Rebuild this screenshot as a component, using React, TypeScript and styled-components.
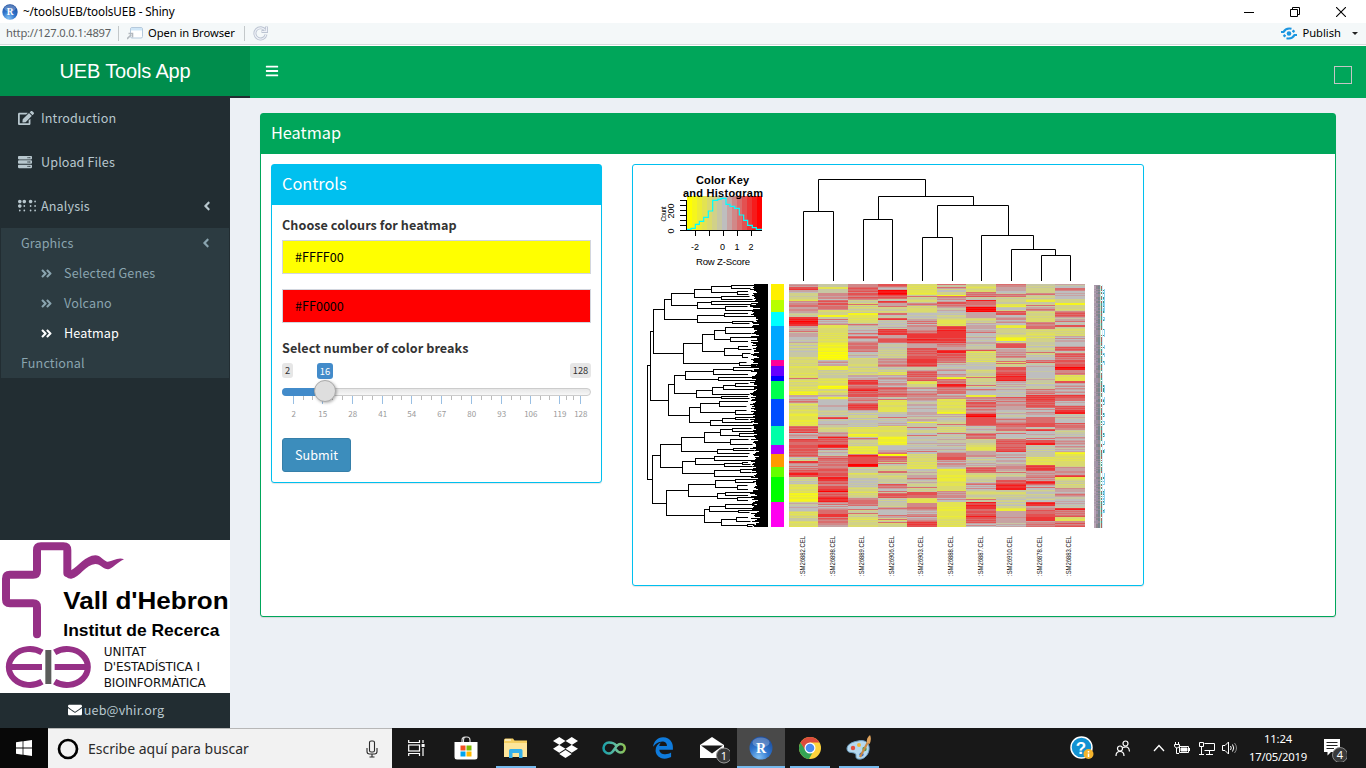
import React from "react";
import styled, { createGlobalStyle } from "styled-components";
import { FaAngleDoubleRight, FaAngleLeft, FaBars, FaBraille, FaDropbox, FaEdgeLegacy, FaEdit, FaEnvelope, FaServer } from "react-icons/fa";

const sans = `"Noto Sans CJK JP", "Noto Sans", sans-serif`;
const ui = `"Noto Sans", "Open Sans", sans-serif`;
const arial = `"Liberation Sans", Arial, sans-serif`;

const Global = createGlobalStyle`
  * { box-sizing: border-box; }
  body { margin: 0; overflow: hidden; background: #ecf0f5; }
  svg { display: block; flex: none; }
`;

const Screen = styled.div`
  width: 1366px;
  height: 768px;
  display: flex;
  flex-direction: column;
  font-family: ${sans};
  font-size: 12.6px;
`;

/* ---------- window chrome ---------- */
const TitleBar = styled.div`
  height: 23px;
  display: flex;
  align-items: center;
  padding: 0 20px 0 2px;
  background: #fff;
  font: 11.7px/23px ${ui};
  color: #000;
`;
const WindowTitle = styled.span`
  flex: 1;
  padding-left: 5px;
  letter-spacing: -0.1px;
`;
const WindowButtons = styled.div`
  display: flex;
  align-items: center;
  gap: 36px;
  height: 20px;
`;
const ToolBar = styled.div`
  height: 23px;
  display: flex;
  align-items: center;
  padding: 0 8px 2px 6px;
  background: #f4f8f9;
  border-bottom: 1px solid #fff;
  box-shadow: inset 0 -1px 0 #d6dadc;
  font: 11.2px/20px ${ui};
  color: #000;
`;
const Url = styled.span`
  width: 112px;
  letter-spacing: -0.2px;
  color: #5c5f61;
`;
const Separator = styled.i`
  width: 1px;
  height: 15px;
  background: #c3c8ca;
`;
const OpenButton = styled.span`
  display: flex;
  align-items: center;
  gap: 5px;
  width: 125px;
  padding-left: 8px;
  white-space: nowrap;
  letter-spacing: -0.07px;
`;
const Publish = styled.span`
  display: flex;
  align-items: center;
  gap: 5px;
  margin-left: auto;
`;
const Caret = styled.i`
  margin-left: 6px;
  border: 3px solid transparent;
  border-top-color: #222;
  border-bottom: 0;
`;

/* ---------- dashboard frame ---------- */
const Header = styled.header`
  height: 52px;
  display: flex;
  background: #00a65a;
  color: #fff;
`;
const Brand = styled.div`
  width: 250px;
  height: 52px;
  background: #008d4c;
  border-bottom: 2px solid #222d32;
  font: 20px/50px ${arial};
  letter-spacing: -0.15px;
  text-align: center;
`;
const HeaderTools = styled.div`
  flex: 1;
  display: flex;
  align-items: center;
  justify-content: space-between;
  padding: 0 14px 0 15px;

  svg { margin-bottom: 2px; }
`;
const EmptyToggle = styled.i`
  width: 18px;
  height: 18px;
  margin-top: 6px;
  border: 1px solid #c5c5c5;
`;
const Body = styled.div`
  height: 630px;
  display: flex;
`;
const Sidebar = styled.aside`
  width: 230px;
  display: flex;
  flex-direction: column;
  background: #222d32;
  color: #b8c7ce;
  letter-spacing: 0.12px;
`;
const MenuItem = styled.div<{ $first?: boolean }>`
  height: ${(p) => (p.$first ? 42 : 44)}px;
  padding: 0 16px ${(p) => (p.$first ? 2 : 0)}px 18px;
  display: flex;
  align-items: center;
  line-height: 20px;
`;
const ItemIcon = styled.span`
  width: 23px;
  display: flex;
`;
const Grow = styled.span`
  flex: 1;
`;
const SubMenu = styled.div`
  margin: 0 1px;
  background: #2c3b41;
  height: 150px;
`;
const SubItem = styled.div<{ $level?: number; $active?: boolean }>`
  height: 30px;
  display: flex;
  align-items: center;
  gap: 11px;
  padding: 0 16px 0 ${(p) => (p.$level === 2 ? 39 : 20)}px;
  line-height: 20px;
  color: ${(p) => (p.$active ? "#fff" : "#8aa4af")};
`;
const SidebarFooter = styled.div`
  margin-top: auto;
`;
const Contact = styled.div`
  height: 35px;
  display: flex;
  align-items: center;
  justify-content: center;
  gap: 2px;
  padding: 0 0 2px 2px;
  line-height: 20px;
`;

/* ---------- content ---------- */
const Content = styled.main`
  flex: 1;
  padding: 15px 30px;
  background: #ecf0f5;
`;
const Box = styled.section<{ $color: string; $w: number; $h: number }>`
  width: ${(p) => p.$w}px;
  height: ${(p) => p.$h}px;
  border: 1px solid ${(p) => p.$color};
  border-radius: 3px;
  background: #fff;
  box-shadow: 0 1px 1px rgba(0, 0, 0, 0.1);
`;
const BoxHeader = styled.h3<{ $color: string }>`
  margin: 0;
  height: 40px;
  padding: 0 10px;
  background: ${(p) => p.$color};
  color: #fff;
  font-weight: 400;
  font-size: 16.3px;
  line-height: 36px;
`;
const HeatmapBody = styled.div`
  display: flex;
  gap: 30px;
  padding: 10px;
`;
const ControlsBody = styled.div`
  display: flex;
  flex-direction: column;
  padding: 10px;
`;
const Label = styled.label`
  height: 20px;
  margin-bottom: 5px;
  line-height: 20px;
  font-weight: 700;
  letter-spacing: 0.06px;
  color: #333;
`;
const ColourInput = styled.div<{ $fill: string }>`
  height: 34px;
  margin-bottom: 15px;
  padding: 0 12px;
  border: 1px solid #d2d6de;
  background: ${(p) => p.$fill};
  color: #000;
  line-height: 32px;
`;
const Submit = styled.button`
  width: 69px;
  height: 34px;
  margin-top: 17px;
  padding: 0;
  border: 1px solid #367fa9;
  border-radius: 3px;
  background: #3c8dbc;
  color: #fff;
  font: 400 12.6px/30px ${sans};
`;

/* ---------- slider ---------- */
const Slider = styled.div`
  height: 59px;
  margin-top: -1px;
`;
const Tags = styled.div`
  display: flex;
  align-items: flex-start;
  height: 26px;
  padding-top: 1px;
`;
const Tag = styled.span<{ $on?: boolean; $w: number }>`
  width: ${(p) => p.$w}px;
  height: ${(p) => (p.$on ? 16 : 15)}px;
  border-radius: 3px;
  text-align: center;
  font-size: 9.3px;
  line-height: ${(p) => (p.$on ? 16 : 15)}px;
  background: ${(p) => (p.$on ? "#428bca" : "#e6e6e6")};
  color: ${(p) => (p.$on ? "#fff" : "#333")};
  & + & { margin-left: 24px; }
  & + & + & { margin-left: auto; }
`;
const Track = styled.div`
  position: relative;
  height: 8px;
  border: 1px solid #ccc;
  border-radius: 8px;
  background: linear-gradient(#dedede -50%, #fff 150%);
`;
const Filled = styled.i`
  display: block;
  width: 42px;
  height: 8px;
  margin: -1px;
  border-radius: 8px 0 0 8px;
  background: #428bca;
`;
const Knob = styled.i`
  position: absolute;
  left: 31px;
  top: -9px;
  width: 22px;
  height: 22px;
  border: 1px solid #ababab;
  border-radius: 50%;
  background: #dedede;
  box-shadow: 1px 1px 3px rgba(0, 0, 0, 0.3);
`;

const marks: [number, number][] = [[11, 2], [40, 15], [70, 28], [100, 41], [129, 54], [159, 67], [189, 80], [219, 93], [248, 106], [277, 119], [298, 128]];

function Ruler() {
  return (
    <svg width="309" height="24" viewBox="0 0 309 24">
      {marks.map(([x, n], i) => {
        const next = marks[i + 1];
        const gap = next ? next[0] - x : 0;
        return (
          <g key={n}>
            <rect x={x} y="0" width="1" height="8" fill="#99bfe3" />
            {next && <rect x={x + Math.round(gap / 3)} width="1" height="4" fill="#bbb" />}
            {next && <rect x={x + Math.round((gap * 2) / 3)} width="1" height="4" fill="#bbb" />}
            <text x={x + 0.8} y="21" textAnchor="middle" fontSize="8" fontFamily={sans} fill="#999">{n}</text>
          </g>
        );
      })}
    </svg>
  );
}

/* ---------- plot ---------- */
const noise = (a: number, b: number) => {
  const s = Math.sin(a * 127.1 + b * 311.7) * 43758.5453;
  return s - Math.floor(s);
};
const ramp = (level: number) => {
  const t = Math.min(7, Math.abs(level)) / 7;
  const up = Math.round(190 + 65 * t);
  const down = Math.round(190 - 190 * t);
  return level < 0 ? `rgb(${up},${up},${down})` : `rgb(${up},${down},${down})`;
};

/* one list per sample: end position, level, end position, level, ... */
const columns: number[][] = [
  [20, 2, 30, 5, 38, 0, 58, -2, 64, -4, 75, 2, 82, 4, 98, 2, 112, -1, 124, 6, 130, 7, 138, 6, 190, 0.5, 230, -1, 294, -3, 297, 3, 318, -3, 333, -4, 345, -6, 362, 1, 370, 2, 400, -3, 437, -5, 455, 4, 460, 7, 476, 1, 483, 5, 530, 4, 542, -1, 550, 5, 570, 2, 580, 4, 586, 6, 592, 4, 612, -1, 640, -4, 665, -6, 692, 0, 710, -3, 725, -2, 741, -4],
  [20, -2, 26, -4, 40, -1, 50, 2, 60, 1, 90, 3, 105, -3, 112, -6, 120, 0, 136, 1, 165, -4, 190, -4, 215, -6, 240, -7, 258, 1, 270, -6, 293, -2, 318, -4, 326, -7, 345, -3, 352, 0, 357, -6, 388, 0, 412, -1, 418, 5, 440, 0, 455, -2, 470, 2, 474, 7, 494, 4, 505, 6, 530, 0, 565, 3, 590, 4, 604, 6, 618, 3, 628, 4, 636, 7, 652, 4, 665, 6, 690, 1, 702, 4, 712, 6, 736, 3, 741, 2],
  [20, 2, 36, 4, 60, 3, 66, -1, 100, -2, 106, -6, 130, -4, 168, 0, 173, 4, 190, 1, 213, 3, 235, 0, 262, -3, 285, -2, 300, 1, 316, 5, 327, 3, 334, 6, 350, 4, 368, 2, 372, 4, 390, 5, 398, 1, 440, -1, 462, -4, 471, -6, 480, 0, 497, -2, 522, -5, 526, 3, 531, 6, 553, 4, 561, 7, 580, -1, 590, -3, 620, -1, 640, -3, 655, -2, 672, 3, 690, 1, 710, -2, 741, -3],
  [22, 4, 30, 1, 44, 7, 58, 4, 62, 0, 68, 5, 82, 2, 98, -2, 106, 3, 114, -1, 121, 5, 148, 0, 165, 5, 174, 2, 188, 4, 205, -1, 235, -1, 262, 2, 275, -1, 285, -4, 320, 1, 340, 3, 348, 4, 360, 0, 395, -4, 437, 0, 472, -4, 495, -6, 510, 0, 522, 2, 527, -7, 545, 3, 562, -1, 590, -2, 612, -1, 625, 3, 640, 0, 655, 4, 680, -1, 690, 2, 705, 0, 714, 2, 741, -2],
  [30, -4, 44, -5, 68, -2, 78, 2, 98, -3, 118, 0, 135, 1, 158, 2, 176, 5, 181, 7, 188, 5, 205, 2, 230, 4, 258, 5, 275, 0, 292, 4, 303, 3, 320, -3, 343, 1, 362, 2, 400, 0, 425, 0, 430, -5, 455, -1, 472, -1, 500, 0, 522, 1, 545, -3, 568, -4, 590, 0, 610, 0, 636, -2, 642, 4, 655, 4, 668, -4, 690, 3, 720, 1, 727, 3, 741, 5],
  [20, -1, 26, 2, 44, -1, 48, -6, 66, 1, 80, 3, 98, 0, 118, -1, 137, -4, 150, 5, 165, 6, 190, 5, 210, 2, 218, 7, 232, 4, 250, 3, 268, 0, 290, 1, 297, -6, 313, 2, 321, 6, 342, 3, 358, 1, 375, -4, 395, -4, 402, -6, 425, 0, 455, -2, 475, -1, 518, 0, 540, 4, 556, 1, 568, 0, 605, -5, 632, -4, 650, 2, 665, 1, 690, -5, 715, -5, 741, -4],
  [36, -3, 52, 3, 60, -1, 64, 7, 72, 4, 82, 3, 96, 7, 114, 2, 130, -2, 160, 1, 210, 0, 213, 4, 245, -3, 270, 0, 290, -2, 295, 4, 320, -2, 345, 0, 352, -6, 366, 2, 382, 4, 402, 2, 412, 7, 428, 5, 438, 4, 458, 0, 476, 3, 495, -2, 514, -4, 530, 2, 545, -1, 562, 0, 580, 4, 605, -2, 630, 1, 650, -2, 665, -2, 669, 7, 674, 4, 687, 6, 708, 4, 712, 6, 730, 4, 741, 1],
  [20, 2, 42, 0, 50, 3, 72, -2, 82, -5, 94, -1, 105, 4, 136, 1, 145, -5, 172, -2, 183, -6, 190, -1, 205, 4, 235, 1, 262, -2, 275, 4, 288, 5, 303, 6, 350, 0, 360, 3, 390, 2, 420, 0, 430, 2, 440, 4, 452, 3, 478, 0, 500, 3, 513, 4, 517, 6, 545, 1, 558, 0, 572, 2, 590, -2, 600, 1, 612, 4, 630, 6, 650, -2, 685, -1, 694, -5, 720, 1, 741, 0],
  [40, -2, 45, 3, 60, -2, 66, -5, 82, -1, 92, 2, 110, -2, 125, -3, 130, 2, 148, 3, 168, -3, 185, -3, 205, -1, 240, -1, 248, 3, 272, 0, 300, 0, 330, -1, 345, 2, 360, 5, 385, 4, 410, 1, 425, 4, 440, 4, 448, 0, 452, 5, 480, 0, 488, 4, 495, 6, 530, -1, 555, -4, 572, 5, 588, 2, 604, 2, 612, 6, 630, 1, 650, -1, 665, -1, 678, 6, 690, 2, 708, 4, 722, 5, 730, 1, 741, 3],
  [24, 0, 30, 4, 55, 1, 68, -1, 76, -6, 92, -3, 96, 2, 110, 4, 135, 0, 142, 4, 168, -2, 200, 1, 212, 4, 220, 0, 240, 3, 262, 4, 270, 7, 285, 3, 303, -4, 308, 4, 345, 1, 350, 5, 362, 4, 378, 1, 390, 4, 402, 6, 430, 0, 450, 3, 470, -1, 500, 1, 515, 0, 522, -6, 545, -4, 560, -3, 585, 2, 592, 5, 598, -5, 625, -2, 650, 1, 685, 0, 690, 6, 712, 3, 724, -4, 741, 3],
];
const edges = [789, 818, 848, 878, 907, 937, 966, 996, 1026, 1055, 1085];

const cellPaths: Record<string, string> = {};
columns.forEach((runs, c) => {
  let k = 0;
  for (let row = 0; row < 243; row++) {
    const y = 12 + row * 3;
    while (runs[k] <= y + 1 && k < runs.length - 2) k += 2;
    const base = runs[k + 1] * 0.9;
    const n = noise(c + 1, row + 1);
    const wide = Math.abs(base) < 3 ? 2.4 : 1.7;
    let level = Math.round(base + (n - 0.5) * wide);
    if (n > 0.95 && Math.abs(base) < 2) level = 3;
    level = Math.max(-7, Math.min(7, level));
    const key = ramp(level);
    cellPaths[key] = (cellPaths[key] || "") + `M${edges[c]} ${284 + row}h${edges[c + 1] - edges[c]}v1h${edges[c] - edges[c + 1]}z`;
  }
});

/* branch: parent x, branch y, node x, first child y, last child y */
const branches: number[][] = [
  [52, 256, 52, 256, 598], [52, 256, 61, 154, 361], [61, 154, 70, 88, 220], [70, 88, 104, 58, 118], [104, 58, 124, 40, 76],
  [124, 40, 193, 28, 52], [193, 28, 245, 19, 37], [245, 19, 305, 16, 24], [245, 37, 323, 34, 43], [193, 52, 275, 49, 58],
  [124, 76, 203, 67, 86], [203, 67, 245, 64, 73], [203, 86, 287, 80, 92], [104, 118, 203, 106, 128], [203, 106, 284, 100, 109],
  [203, 128, 308, 124, 131], [70, 220, 161, 190, 250], [161, 190, 218, 163, 214], [218, 163, 254, 151, 178], [254, 151, 287, 142, 160],
  [254, 178, 302, 172, 184], [218, 214, 284, 205, 227], [284, 205, 326, 199, 208], [284, 227, 338, 220, 232], [161, 250, 329, 247, 256],
  [61, 361, 115, 313, 406], [115, 313, 134, 286, 340], [134, 286, 167, 274, 298], [167, 274, 251, 268, 283], [251, 268, 311, 263, 271],
  [167, 298, 266, 293, 301], [134, 340, 200, 331, 352], [200, 331, 248, 322, 343], [248, 322, 281, 317, 328], [281, 317, 317, 311, 320],
  [200, 352, 275, 349, 356], [115, 406, 179, 382, 428], [179, 382, 212, 370, 398], [212, 370, 269, 364, 379], [212, 398, 317, 392, 403],
  [179, 428, 242, 421, 437], [242, 421, 278, 415, 428], [278, 415, 317, 412, 418], [52, 598, 67, 526, 670], [67, 526, 92, 493, 562],
  [92, 493, 155, 472, 514], [155, 472, 224, 457, 487], [224, 457, 272, 448, 466], [272, 448, 308, 445, 454], [272, 466, 329, 461, 470],
  [224, 487, 302, 479, 493], [155, 514, 263, 508, 520], [263, 508, 311, 505, 511], [92, 562, 158, 544, 580], [158, 544, 197, 535, 553],
  [197, 535, 254, 529, 541], [197, 553, 284, 550, 559], [284, 550, 338, 547, 553], [158, 580, 254, 571, 589], [254, 571, 332, 568, 577],
  [67, 670, 110, 631, 706], [110, 631, 176, 613, 649], [176, 613, 257, 601, 623], [257, 601, 317, 598, 607], [257, 623, 323, 616, 628],
  [176, 649, 263, 640, 655], [263, 640, 287, 637, 646], [263, 655, 323, 652, 661], [110, 706, 224, 688, 727], [224, 688, 239, 679, 694],
  [239, 679, 287, 673, 685], [239, 694, 326, 691, 697], [224, 727, 275, 718, 737], [275, 718, 320, 712, 724], [275, 737, 353, 733, 740],
];
const px = (v: number) => 630 + Math.floor(v / 3) + 0.5;
const py = (v: number) => 280 + Math.floor(v / 3) + 0.5;
const rowTree = branches
  .map(([from, y, x, a, b]) => {
    const tips = [a, b]
      .filter((t) => !branches.some((q) => q[0] === x && q[1] === t))
      .map((t) => `M${px(x)} ${py(t)}H${px(350 + noise(t, 3) * 30)}`)
      .join("");
    return `M${px(from)} ${py(y)}H${px(x)}M${px(x)} ${py(a) - 0.5}V${py(b) + 0.5}${tips}`;
  })
  .join("");
const fringe = Array.from({ length: 243 }, (_, i) => {
  const start = Math.round(750 + noise(i + 5, 9) * 7);
  return `M${start} ${284 + i}H768v1H${start}z`;
}).join("");
const gaps = Array.from({ length: 44 }, (_, i) => {
  const w = Math.round(5 + noise(i + 2, 4) * 7);
  return `M748 ${286 + Math.floor(i * 5.5)}h${w}v1h-${w}z`;
}).join("");

const clusters: [number, string][] = [
  [60, "#fff000"], [96, "#b8ff00"], [138, "#00ffff"], [240, "#00a6ff"], [258, "#ff0099"], [288, "#6600ff"], [303, "#0000ff"], [357, "#00ff4d"],
  [438, "#004dff"], [495, "#00ffa8"], [522, "#b300ff"], [561, "#ff9900"], [591, "#66ff00"], [666, "#00ff00"], [741, "#ff00f0"],
];
const samples = ["26882", "26898", "26889", "26906", "26903", "26888", "26887", "26910", "26878", "26883"];
const columnTree =
  "M818.5 211V179.5H925.5V196M803.5 281V211.5H833.5V281M878.5 219V196.5H973.5V205M863.5 281V219.5H892.5V281M937.5 237V205.5H1008.5V235M922.5 281V237.5H952.5V281M981.5 281V235.5H1033.5V249M1011.5 281V249.5H1055.5V255M1041.5 281V255.5H1070.5V281";
const histogram =
  "M171 208H183V205H196V193H208V184H221V172H235V153H248V121H263V118H273V115H288V133H300V139H314V145H328V165H341V181H353V196H367V203H379V208H396";

function Plot() {
  return (
    <svg width="510" height="420" viewBox="633 165 510 420" fontFamily={arial}>
      {Array.from({ length: 15 }, (_, i) => (
        <rect key={i} x={687 + i * 5} y="196" width="5" height="35" fill={ramp(i - 7)} shapeRendering="crispEdges" />
      ))}
      <path d={histogram} transform="translate(630 160) scale(.33333)" fill="none" stroke="#0ff" strokeWidth="3.6" />
      <path d="M686.5 231V200M680 230.5H762M680 225.5h6M680 220.5h6M680 215.5h6M680 210.5h6M680 205.5h6M680 200.5h6M695.5 231v5M709.5 231v5M723.5 231v5M737.5 231v5M751.5 231v5" stroke="#000" fill="none" />
      <g textAnchor="middle" fill="#000">
        <g fontSize="11" fontWeight="700">
          <text x="722.5" y="184" textLength="53">Color Key</text>
          <text x="723" y="197" textLength="80">and Histogram</text>
        </g>
        <g fontSize="9">
          <text x="695" y="250">-2</text>
          <text x="722.5" y="250">0</text>
          <text x="737" y="250">1</text>
          <text x="751" y="250">2</text>
          <text x="723" y="265" fontSize="9.6" textLength="54">Row Z-Score</text>
          <text transform="translate(674 211) rotate(-90)">200</text>
          <text transform="translate(674 231) rotate(-90)">0</text>
          <text transform="translate(666 214) rotate(-90)" fontSize="6.5" textLength="15">Count</text>
        </g>
      </g>
      <path d={columnTree} fill="none" stroke="#000" />
      <path d={rowTree} fill="none" stroke="#000" />
      <path d={fringe} />
      <path d={gaps} fill="#fff" />
      {clusters.map(([end, fill], i) => {
        const y = 280 + (i ? clusters[i - 1][0] : 12) / 3;
        return <rect key={end} x="771" y={y} width="13" height={280 + end / 3 - y} fill={fill} />;
      })}
      <g shapeRendering="crispEdges">
        {Object.entries(cellPaths).map(([fill, d]) => (
          <path key={fill} d={d} fill={fill} />
        ))}
        {Array.from({ length: 243 }, (_, i) => {
          const n = noise(i, 21);
          const y = 285 + i;
          return (
            <g key={i}>
              <rect x="1094" y={y} width="2" height="1" fill={n > 0.5 ? "#b9a3b5" : "#a79aa8"} />
              <rect x="1096" y={y} width="2" height="1" fill={n > 0.6 ? "#8d868c" : "#9c8fa5"} />
              <rect x="1098" y={y} width="2" height="1" fill={n > 0.4 ? "#77858d" : "#968b93"} />
              <rect x="1100" y={y} width="1" height="1" fill="#c8e8d0" />
              {n > 0.2 && <rect x="1101" y={y} width="1" height="1" fill={n > 0.55 ? "#b2605b" : "#4b9a8c"} />}
              <rect x="1102" y={y} width="1" height="1" fill="#cfeefa" />
              {noise(i >> 2, 8) > 0.5 && n > 0.3 && <rect x="1103" y={y} width="1" height="1" fill={n > 0.6 ? "#3b978a" : "#74c6ea"} />}
              {noise(i >> 2, 8) > 0.5 && <rect x="1104" y={y} width="1" height="1" fill="#8fd3f2" />}
            </g>
          );
        })}
      </g>
      {samples.map((name, i) => (
        <text key={name} transform={`translate(${805 + Math.round(i * 29.6)} 576) rotate(-90)`} fontSize="7" textLength="40" lengthAdjust="spacingAndGlyphs" fill="#111">
          :SM{name}.CEL
        </text>
      ))}
    </svg>
  );
}

/* ---------- logos and icons ---------- */
function InstituteLogo() {
  return (
    <svg width="230" height="153" viewBox="0 15 690 459">
      <rect y="15" width="690" height="459" fill="#fff" />
      <path d="M111 298V217Q111 205 99 205H30Q18 205 18 193V131Q18 119 30 119H99Q111 119 111 107V46Q111 34 123 34H190Q202 34 202 46V114" fill="none" stroke="#963086" strokeWidth="24" strokeLinecap="round" />
      <path d="M192 112Q196 132 214 131C238 128 258 88 286 87C302 87 311 104 325 103C338 101 352 82 372 73C352 65 337 82 321 80C306 74 302 62 286 61C256 62 236 94 213 106Z" fill="#963086" />
      <g fontFamily={arial} fontWeight="700" fill="#000" letterSpacing="0">
        <text x="190" y="223" fontSize="74" textLength="496" lengthAdjust="spacingAndGlyphs">Vall d'Hebron</text>
        <text x="190" y="303" fontSize="49" textLength="468" lengthAdjust="spacingAndGlyphs">Institut de Recerca</text>
      </g>
      <g fill="none" stroke="#963086" strokeWidth="18">
        <path d="M126 352A63 54 0 1 0 126 440M30 396H126M164 352A63 54 0 1 1 164 440M164 396H262" />
      </g>
      <rect x="136" y="345" width="18" height="102" fill="#5a5c5a" />
      <g fontFamily={`"DejaVu Sans", sans-serif`} fontSize="36" fill="#111" letterSpacing="0">
        <text x="311" y="363" textLength="127">UNITAT</text>
        <text x="311" y="409" textLength="289">D'ESTADÍSTICA I</text>
        <text x="311" y="455" textLength="306">BIOINFORMÀTICA</text>
      </g>
    </svg>
  );
}

function RBall({ size }: { size: number }) {
  return (
    <svg width={size} height={size} viewBox="0 0 24 24">
      <defs>
        <radialGradient id={`ball${size}`} cx=".4" cy=".9" r=".9">
          <stop offset="0" stopColor="#7fc0f5" />
          <stop offset=".5" stopColor="#2f74cb" />
          <stop offset="1" stopColor="#1b4c9d" />
        </radialGradient>
      </defs>
      <circle cx="12" cy="12" r="11.5" fill={`url(#ball${size})`} />
      <ellipse cx="12" cy="6.5" rx="8.5" ry="5" fill="#fff" opacity=".25" />
      <text x="12" y="17" textAnchor="middle" fontFamily={`"Liberation Serif", serif`} fontWeight="700" fontSize="14" fill="#fff">R</text>
    </svg>
  );
}

/* ---------- taskbar ---------- */
const TaskBar = styled.footer`
  height: 40px;
  display: flex;
  background: #181818;
  color: #fff;
`;
const Start = styled.div`
  width: 48px;
  display: flex;
  align-items: center;
  justify-content: center;
  background: #080808;
`;
const Search = styled.div`
  width: 344px;
  display: flex;
  align-items: center;
  padding: 0 13px 0 8px;
  background: #f2f2f2;
  border-top: 1px solid #b7b7b7;
  color: #2b2b2b;
  font: 14px/38px ${ui};
`;
const SearchText = styled.span`
  flex: 1;
  padding-left: 8px;
`;
const AppIcon = styled.span`
  height: 38px;
  display: flex;
  align-items: center;
  padding-top: 1px;
`;
const AppSlot = styled.div<{ $open?: boolean; $active?: boolean; $w?: number }>`
  width: ${(p) => p.$w ?? 49}px;
  height: 40px;
  display: flex;
  justify-content: center;
  background-color: ${(p) => (p.$active ? "#494949" : "transparent")};
  background-image: ${(p) => (p.$open ? "linear-gradient(#76b9ed, #76b9ed)" : "none")};
  background-repeat: no-repeat;
  background-position: center bottom;
  background-size: ${(p) => (p.$active ? "100%" : "40px")} 2px;
`;
const Tray = styled.div`
  margin-left: auto;
  display: flex;
  align-items: center;
`;
const TraySlot = styled.div<{ $w: number }>`
  width: ${(p) => p.$w}px;
  display: flex;
  justify-content: center;
`;
const Clock = styled.div`
  width: 68px;
  text-align: center;
  font: 11.3px/18px ${ui};
  letter-spacing: -0.2px;
`;

const line = { fill: "none", stroke: "currentColor" };

function Taskbar() {
  return (
    <TaskBar>
      <Start>
        <svg width="16" height="16" viewBox="0 0 16 16" fill="#fff">
          <path d="M0 2.2 6.6 1.3V7.6H0zM7.4 1.2 16 0V7.6H7.4zM0 8.4H6.6V14.7L0 13.8zM7.4 8.4H16V16L7.4 14.8z" />
        </svg>
      </Start>
      <Search>
        <svg width="24" height="24" viewBox="0 0 24 24"><circle cx="12" cy="12" r="9" fill="none" stroke="#000" strokeWidth="2.7" /></svg>
        <SearchText>Escribe aquí para buscar</SearchText>
        <svg width="14" height="18" viewBox="0 0 14 18" {...line} strokeWidth="1.1">
          <rect x="4.5" y="1" width="5" height="11" rx="1.6" />
          <path d="M2 8v3.5Q2 14 4.5 14h5Q12 14 12 11.5V8M7 14v3M4.5 17h5" />
        </svg>
      </Search>
      <AppSlot $w={48}>
        <AppIcon>
          <svg width="17" height="16" viewBox="0 0 17 16" {...line} strokeWidth="1.2">
            <path d="M.7 0V2.5H11.5V0M.7 16V13.5H11.5V16M15 0V3M15 8V16" />
            <rect x=".7" y="5" width="10.8" height="6" />
            <rect x="13.6" y="4" width="3" height="3" fill="#fff" stroke="none" />
          </svg>
        </AppIcon>
      </AppSlot>
      <AppSlot $w={51}>
        <AppIcon>
          <svg width="24" height="24" viewBox="0 0 24 24">
            <path d="M8 6V4Q8 1 11 1H13Q16 1 16 4V6M9.5 6V4Q9.5 1 12 1" fill="none" stroke="#ddd" strokeWidth="1.1" />
            <path d="M.5 6H23.5V21Q23.5 23.5 21 23.5H3Q.5 23.5 .5 21Z" fill="#fff" />
            <path d="M6.5 9.5h5v5h-5z" fill="#f25022" /><path d="M12.5 9.5h5v5h-5z" fill="#7fba00" />
            <path d="M6.5 15.5h5v5h-5z" fill="#00a4ef" /><path d="M12.5 15.5h5v5h-5z" fill="#ffb900" />
          </svg>
        </AppIcon>
      </AppSlot>
      <AppSlot $open>
        <AppIcon>
          <svg width="23" height="20" viewBox="0 0 23 20">
            <path d="M0 2Q0 .5 1.5 .5H9L10.5 2.5H23V19H0Z" fill="#f5cf62" />
            <path d="M0 5H23V19H0Z" fill="#fde59a" />
            <path d="M1 1.5H7V2.5H1Z" fill="#fff" />
            <path d="M5 20V12.5Q5 11 6.5 11H17Q18.5 11 18.5 12.5V20H15V15H8.5V20Z" fill="#35b0ea" />
          </svg>
        </AppIcon>
      </AppSlot>
      <AppSlot $w={50}><AppIcon><FaDropbox size={25} /></AppIcon></AppSlot>
      <AppSlot $w={48}>
        <AppIcon>
          <svg width="24" height="14" viewBox="0 0 24 14">
            <defs><linearGradient id="loop"><stop offset="0" stopColor="#1ba0a8" /><stop offset=".6" stopColor="#66bfa0" /><stop offset="1" stopColor="#8cc152" /></linearGradient></defs>
            <path d="M14 4.5C12 1.5 9.5 1.5 7 1.5A5.4 5.4 0 0 0 7 12.5C12.5 12.5 13 3 18.5 3A4.1 4.1 0 0 1 18.5 11.5C16 11.5 15 10 13.5 8" fill="none" stroke="url(#loop)" strokeWidth="2.5" />
          </svg>
        </AppIcon>
      </AppSlot>
      <AppSlot $w={50}><AppIcon><FaEdgeLegacy size={22} color="#0f7bdc" /></AppIcon></AppSlot>
      <AppSlot $w={49}>
        <AppIcon>
          <svg width="34" height="32" viewBox="0 0 34 32">
            <path d="M4 13 16 5 28 13V26H4Z" fill="#fff" />
            <path d="M5 13.5H27L16 21.5Z" fill="#1a1a1a" />
            <circle cx="28" cy="23.5" r="7.5" fill="#3a3a3a" stroke="#9a9a9a" />
            <text x="28" y="27.5" textAnchor="middle" fontFamily={ui} fontSize="11" fill="#fff">1</text>
          </svg>
        </AppIcon>
      </AppSlot>
      <AppSlot $w={48} $active $open><AppIcon><RBall size={24} /></AppIcon></AppSlot>
      <AppSlot $w={50} $open>
        <AppIcon>
          <svg width="24" height="24" viewBox="0 0 24 24">
            <circle cx="12" cy="12" r="11" fill="#fdd33c" />
            <path d="M2.5 6.5A11 11 0 0 0 11 23L15.5 15 8 14Z" fill="#34a353" />
            <path d="M12 6.5H21.5A11 11 0 0 0 2.5 6.5L7.5 14.5Z" fill="#dd4b3c" />
            <circle cx="12" cy="12" r="5.5" fill="#fff" /><circle cx="12" cy="12" r="4.3" fill="#4a8bf0" />
          </svg>
        </AppIcon>
      </AppSlot>
      <AppSlot $w={48} $open>
        <AppIcon>
          <svg width="26" height="26" viewBox="0 0 26 26">
            <path d="M12 6C20 4 24 9 23 15 22 21 17 25 12 24 8 23 12 19 8 18 4 17 1 18 1 13 2 9 6 7 12 6Z" fill="#b5d9ef" stroke="#6fa2c4" />
            <circle cx="7" cy="13" r="2.2" fill="#e3503e" /><circle cx="13" cy="10" r="2" fill="#f0b93c" />
            <circle cx="18.5" cy="14" r="2.2" fill="#4d9b44" /><circle cx="15.5" cy="19.5" r="2.1" fill="#3765c2" />
            <path d="M22 7 14 22" stroke="#c98a45" strokeWidth="2.2" /><path d="M21 8Q20 3 24 0 26 4 23.5 9Z" fill="#e0a35c" />
          </svg>
        </AppIcon>
      </AppSlot>
      <Tray>
        <TraySlot $w={25}>
          <svg width="24" height="24" viewBox="0 0 24 24">
            <circle cx="11.5" cy="11.5" r="10.5" fill="#1392d2" stroke="#fff" strokeWidth="1.5" />
            <text x="11" y="18" textAnchor="middle" fontFamily={arial} fontWeight="700" fontSize="17" fill="#fff">?</text>
            <circle cx="18.5" cy="18" r="5" fill="#f4b32c" /><path d="M18.5 15v1.5M18.5 17.5V21" stroke="#fff" strokeWidth="1.5" />
          </svg>
        </TraySlot>
        <TraySlot $w={58}>
          <svg width="16" height="17" viewBox="0 0 16 17" {...line} strokeWidth="1.2">
            <circle cx="10.5" cy="3.5" r="2.5" /><circle cx="5" cy="8.5" r="2.5" />
            <path d="M1 16Q1 11.5 5 11.5T9 16M8 7.5Q14 5 14.5 11.5" />
          </svg>
        </TraySlot>
        <TraySlot $w={14}><svg width="12" height="8" viewBox="0 0 12 8" {...line} strokeWidth="1.3"><path d="M1 7 6 1.5 11 7" /></svg></TraySlot>
        <TraySlot $w={32}>
          <svg width="17" height="13" viewBox="0 0 17 13" {...line}>
            <path d="M5.5 4.5H14.5V10.5H5.5ZM15.5 6V9M2.5 6V11.5H5M1.5 0V3M4.5 0V3M.5 2.5H5.5V4Q5 6 3 6 1 6 .5 4Z" /><path d="M7 6H13V9H7Z" fill="#fff" />
          </svg>
        </TraySlot>
        <TraySlot $w={18}>
          <svg width="17" height="15" viewBox="0 0 17 15" {...line}><path d="M5.5 2.5H15.5V9.5H5.5M10.5 10V13.5M7 13.5H14M.5 1.5H4.5V5.5H.5ZM2.5 6V14M0 13.5H5" /></svg>
        </TraySlot>
        <TraySlot $w={28}>
          <svg width="16" height="14" viewBox="0 0 16 14" {...line}><path d="M.5 4.5H3L6.5 1V13L3 9.5H.5ZM8.5 5Q10 7 8.5 9M10.5 3.5Q13 7 10.5 10.5" /><path d="M12.5 2Q16.5 7 12.5 12" opacity=".5" /></svg>
        </TraySlot>
        <Clock>11:24<br />17/05/2019</Clock>
        <TraySlot $w={42}>
          <svg width="28" height="28" viewBox="0 0 28 28">
            <path d="M5 5H21V18H12L8.5 21.5V18H5Z" fill="#fff" /><path d="M7.5 8.5H18.5M7.5 11.5H18.5M7.5 14.5H15" stroke="#222" />
            <circle cx="21" cy="21" r="7.5" fill="#3a3a3a" stroke="#8a8a8a" />
            <text x="21" y="25" textAnchor="middle" fontFamily={ui} fontSize="11" fill="#fff">4</text>
          </svg>
        </TraySlot>
        <TraySlot $w={12} />
      </Tray>
    </TaskBar>
  );
}

export default function App() {
  return (
    <Screen>
      <Global />
      <TitleBar>
        <RBall size={16} />
        <WindowTitle>~/toolsUEB/toolsUEB - Shiny</WindowTitle>
        <WindowButtons>
          <svg width="10" height="10" viewBox="0 0 10 10" stroke="#000"><path d="M0 5.5H10" /></svg>
          <svg width="10" height="10" viewBox="0 0 10 10" fill="none" stroke="#000"><path d="M.5 2.5H7.5V9.5H.5ZM2.5 2V.5H9.5V7.5H8" /></svg>
          <svg width="10" height="10" viewBox="0 0 10 10" stroke="#000" strokeWidth="1.1"><path d="M0 0 10 10M10 0 0 10" /></svg>
        </WindowButtons>
      </TitleBar>
      <ToolBar>
        <Url>http://127.0.0.1:4897</Url>
        <Separator />
        <OpenButton>
          <svg width="16" height="13" viewBox="0 0 16 13">
            <rect x="3.5" y=".5" width="12" height="10.5" rx="1.5" fill="#fff" stroke="#b5c9dc" />
            <path d="M4 1H15V3.5H4Z" fill="#cfe6f7" />
            <path d="M0 12 4 8M1.5 6.5H5.5V10.5" stroke="#b3b9bf" strokeWidth="1.6" fill="none" />
          </svg>
          Open in Browser
        </OpenButton>
        <Separator />
        <svg width="32" height="16" viewBox="-8 0 32 16">
          <path d="M12.3 5.5A5.6 5.6 0 1 0 13 9.5M13.5 1.5V6.5H8.5" fill="none" stroke="#bcc4d2" strokeWidth="3" />
          <path d="M12.3 5.5A5.6 5.6 0 1 0 13 9.5M13.5 2V6.5H9" fill="none" stroke="#eef1f7" strokeWidth="1.2" />
        </svg>
        <Publish>
          <svg width="16" height="13" viewBox="0 0 16 13" fill="none" stroke="#1b95e0" strokeWidth="2.2">
            <circle cx="8" cy="6.5" r="2.3" fill="#1b95e0" stroke="none" />
            <path d="M0 5H2.5Q5 .5 10.5 1.8M16 8H13.5Q11 12.5 5.5 11.2M11.5 3.5 13.5 5M4.5 9.5 2.5 8" />
          </svg>
          Publish
          <Caret />
        </Publish>
      </ToolBar>
      <Header>
        <Brand>UEB Tools App</Brand>
        <HeaderTools>
          <FaBars size={14} />
          <EmptyToggle />
        </HeaderTools>
      </Header>
      <Body>
        <Sidebar>
          <MenuItem $first><ItemIcon><FaEdit size={16} /></ItemIcon>Introduction</MenuItem>
          <MenuItem><ItemIcon><FaServer size={14} /></ItemIcon>Upload Files</MenuItem>
          <MenuItem><ItemIcon><FaBraille size={18} /></ItemIcon><Grow>Analysis</Grow><FaAngleLeft size={14} /></MenuItem>
          <SubMenu>
            <SubItem><Grow>Graphics</Grow><FaAngleLeft size={14} /></SubItem>
            <SubItem $level={2}><FaAngleDoubleRight size={13} />Selected Genes</SubItem>
            <SubItem $level={2}><FaAngleDoubleRight size={13} />Volcano</SubItem>
            <SubItem $level={2} $active><FaAngleDoubleRight size={13} />Heatmap</SubItem>
            <SubItem>Functional</SubItem>
          </SubMenu>
          <SidebarFooter>
            <InstituteLogo />
            <Contact><FaEnvelope size={14} color="#fff" />ueb@vhir.org</Contact>
          </SidebarFooter>
        </Sidebar>
        <Content>
          <Box $color="#00a65a" $w={1076} $h={504}>
            <BoxHeader $color="#00a65a">Heatmap</BoxHeader>
            <HeatmapBody>
              <Box $color="#00c0ef" $w={331} $h={319}>
                <BoxHeader $color="#00c0ef">Controls</BoxHeader>
                <ControlsBody>
                  <Label>Choose colours for heatmap</Label>
                  <ColourInput $fill="#ffff00">#FFFF00</ColourInput>
                  <ColourInput $fill="#ff0000">#FF0000</ColourInput>
                  <Label>Select number of color breaks</Label>
                  <Slider>
                    <Tags>
                      <Tag $w={11}>2</Tag>
                      <Tag $on $w={16}>16</Tag>
                      <Tag $w={21}>128</Tag>
                    </Tags>
                    <Track><Filled /><Knob /></Track>
                    <Ruler />
                  </Slider>
                  <Submit>Submit</Submit>
                </ControlsBody>
              </Box>
              <Box $color="#00c0ef" $w={512} $h={422}><Plot /></Box>
            </HeatmapBody>
          </Box>
        </Content>
      </Body>
      <Taskbar />
    </Screen>
  );
}
